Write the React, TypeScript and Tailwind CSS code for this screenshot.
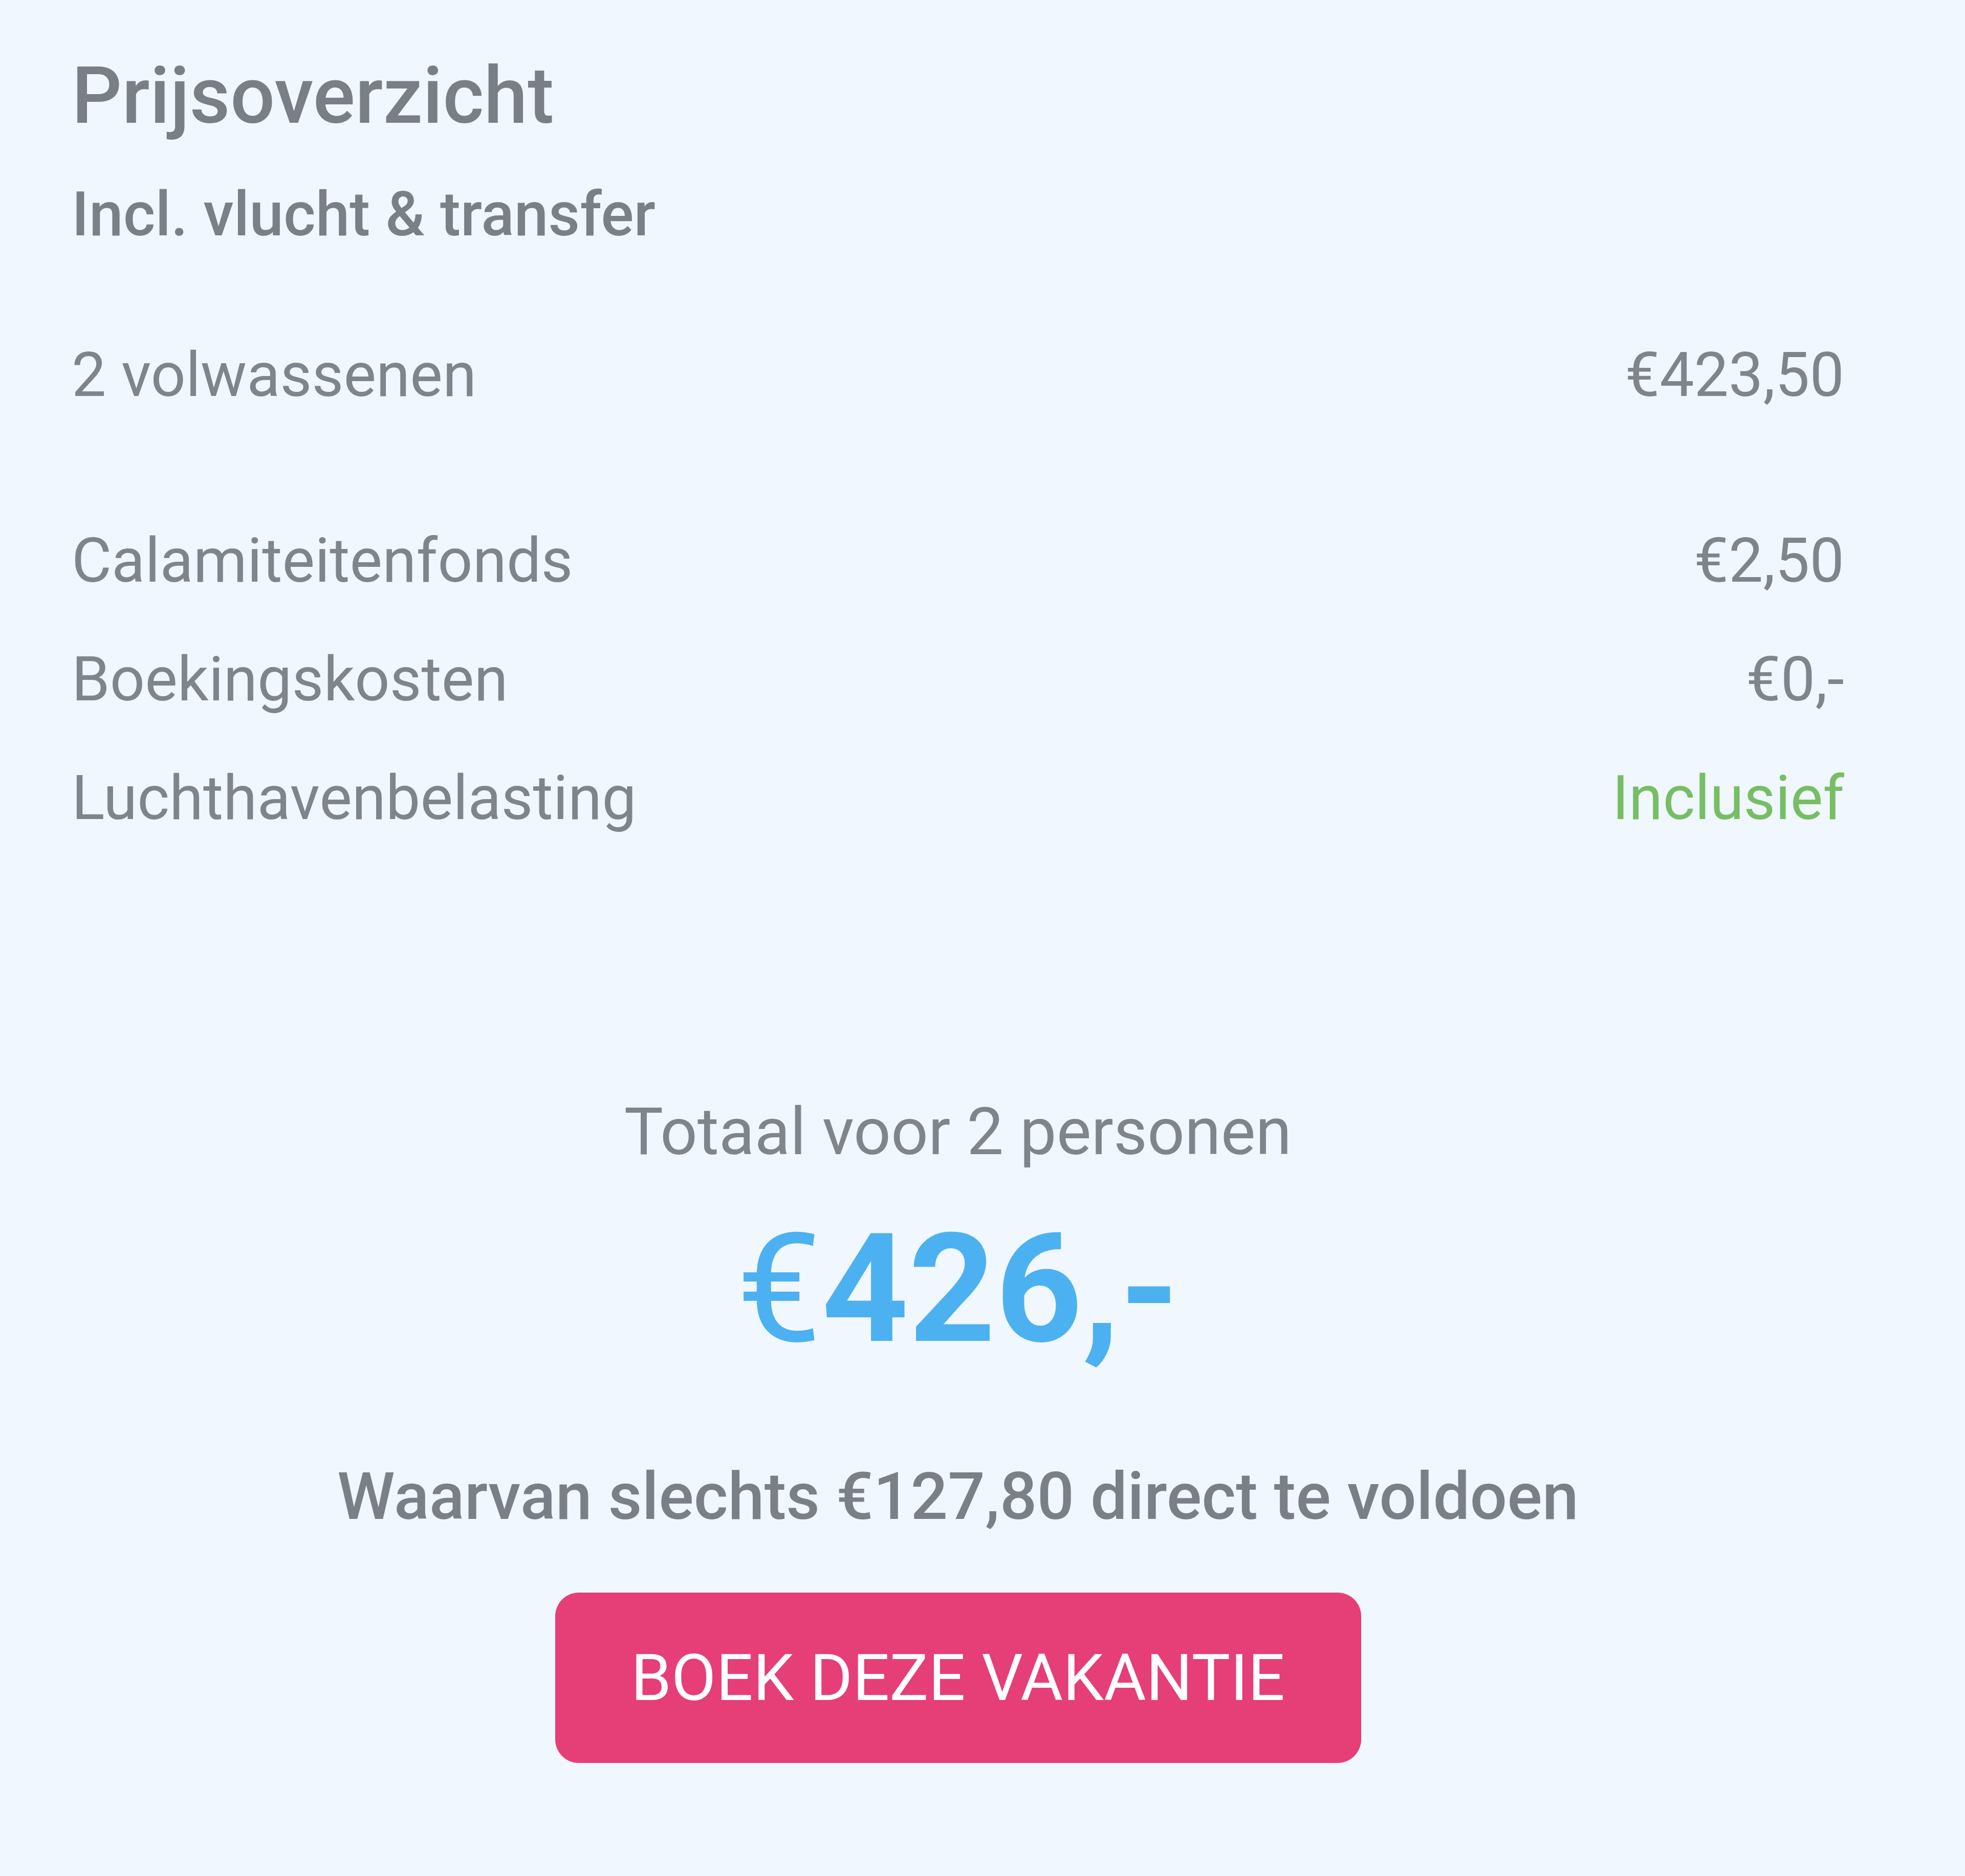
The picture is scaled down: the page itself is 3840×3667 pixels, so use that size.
const rows = [
  { label: "Calamiteitenfonds", value: "€2,50" },
  { label: "Boekingskosten", value: "€0,-" },
  { label: "Luchthavenbelasting", value: "Inclusief", green: true },
];

export default function App() {
  return (
    <div className="min-h-screen w-full bg-[#f0f7fe] font-['Roboto',sans-serif] text-[#80858c]">
      <div className="flex flex-col pt-[111px] pb-[219px] pl-[140px] pr-[236px]">
        <h1 className="text-[154px] leading-none font-medium text-[#7a7e86]">Prijsoverzicht</h1>
        <p className="mt-[94px] text-[120px] leading-none font-medium text-[#7b8088]">Incl. vlucht &amp; transfer</p>

        <div className="mt-[194px] flex justify-between text-[120px] leading-none">
          <span>2 volwassenen</span>
          <span>€423,50</span>
        </div>

        <div className="mt-[243px] flex flex-col gap-[112px] text-[120px] leading-none">
          {rows.map((row) => (
            <div key={row.label} className="flex justify-between">
              <span>{row.label}</span>
              <span className={row.green ? "text-[#76be64]" : ""}>{row.value}</span>
            </div>
          ))}
        </div>

        <div className="mt-[528px] flex flex-col items-center">
          <p className="text-[128px] leading-none">Totaal voor 2 personen</p>
          <p className="mt-[96px] text-[296px] leading-none text-[#4cb1f1]">
            <span className="font-normal">€</span>
            <span className="font-bold">426,-</span>
          </p>
          <p className="mt-[193px] text-[128px] leading-none font-medium text-[#7b8088]">
            Waarvan slechts €127,80 direct te voldoen
          </p>
          <button className="mt-[124px] flex h-[333px] w-[1575px] items-center justify-center rounded-[46px] bg-[#e63e77] text-[127px] leading-none text-white">
            BOEK DEZE VAKANTIE
          </button>
        </div>
      </div>
    </div>
  );
}
